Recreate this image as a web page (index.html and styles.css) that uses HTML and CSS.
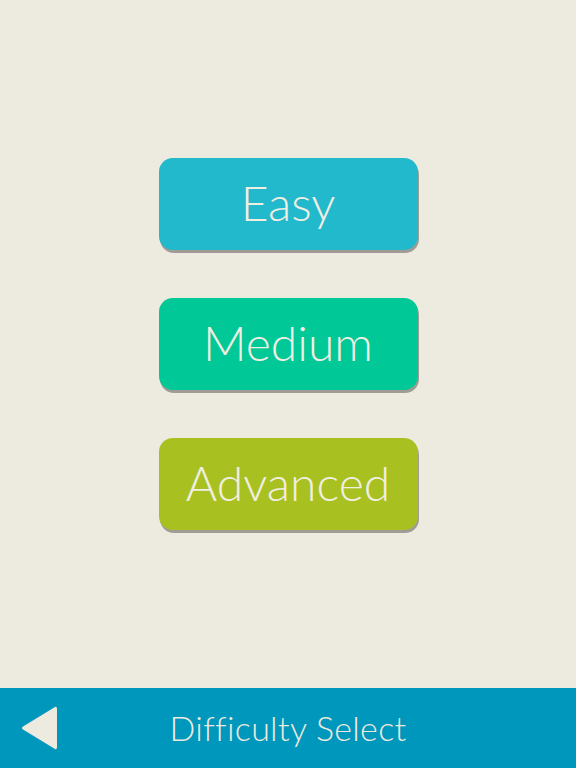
FILE: index.html
```html
<!DOCTYPE html>
<html lang="en">
<head>
    <meta charset="UTF-8">
    <meta name="viewport" content="width=device-width, initial-scale=1.0">
    <title>Difficulty Select</title>
    <link rel="stylesheet" href="styles.css">
</head>
<body>

    <div class="menu">
        <button class="btn btn-easy">Easy</button>
        <button class="btn btn-medium">Medium</button>
        <button class="btn btn-advanced">Advanced</button>
    </div>

    <div class="bottom-bar">
        <button class="back" aria-label="Back">
            <svg width="40" height="46" viewBox="0 0 40 46">
                <path d="M36 2 Q38 1 38 4 L38 42 Q38 45 36 44 L4 24.5 Q2 23 4 21.5 Z" fill="#edeadf"/>
            </svg>
        </button>
        <div class="title">Difficulty Select</div>
    </div>

</body>
</html>
```

FILE: styles.css
```css
body {
    font-family: Lato, "Open Sans", sans-serif;
    background-color: #edeadf;
    margin: 0;
    padding: 0;
    height: 768px;
    display: flex;
    flex-direction: column;
}

.menu {
    flex: 1;
    display: flex;
    flex-direction: column;
    align-items: center;
    padding-top: 158px;
    gap: 48px;
}

.btn {
    width: 259px;
    height: 92px;
    border: none;
    border-radius: 14px;
    box-shadow: 1px 3px 0 #a09c95;
    color: #f1eee2;
    font-family: Lato, sans-serif;
    font-weight: 300;
    font-size: 48px;
    padding: 0 0 4px;
    cursor: pointer;
}

.btn-easy {
    background-color: #22b9cc;
}

.btn-medium {
    background-color: #00c896;
}

.btn-advanced {
    background-color: #a8c120;
}

.bottom-bar {
    height: 80px;
    background-color: #0097bd;
    display: flex;
    align-items: center;
    position: relative;
}

.back {
    position: absolute;
    left: 19px;
    top: 17px;
    background: none;
    border: none;
    padding: 0;
    cursor: pointer;
}

.title {
    flex: 1;
    text-align: center;
    color: #edeadf;
    font-weight: 300;
    font-size: 34px;
    letter-spacing: 0.3px;
    font-variant-ligatures: none;
    padding-bottom: 2px;
}
```
